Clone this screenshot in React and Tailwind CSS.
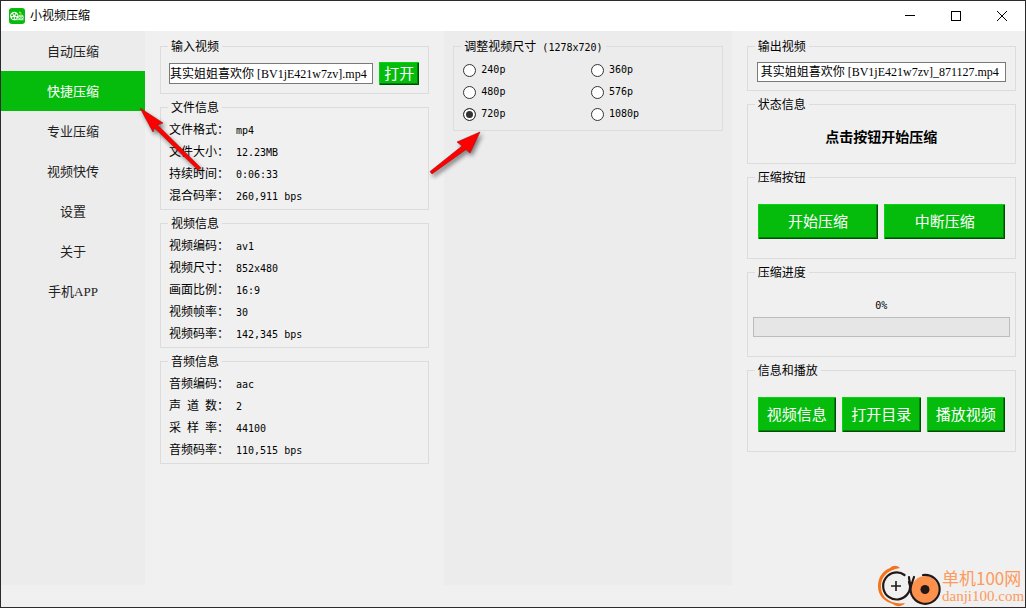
import React, { useState } from "react";

const navItems = ["自动压缩", "快捷压缩", "专业压缩", "视频快传", "设置", "关于", "手机APP"];

const fileInfo = [
  ["文件格式", "mp4"],
  ["文件大小", "12.23MB"],
  ["持续时间", "0:06:33"],
  ["混合码率", "260,911 bps"],
];

const videoInfo = [
  ["视频编码", "av1"],
  ["视频尺寸", "852x480"],
  ["画面比例", "16:9"],
  ["视频帧率", "30"],
  ["视频码率", "142,345 bps"],
];

const audioInfo = [
  ["音频编码", "aac"],
  ["声 道 数", "2"],
  ["采 样 率", "44100"],
  ["音频码率", "110,515 bps"],
];

const sizes = ["240p", "360p", "480p", "576p", "720p", "1080p"];

const Group = ({ title, className, children }) => (
  <fieldset className="min-w-0 border border-[#dcdcdc]">
    <legend className="ml-[7px] px-[3px] pt-0.5 text-xs leading-[14px]">{title}</legend>
    <div className={className}>{children}</div>
  </fieldset>
);

const Mono = ({ children }) => (
  <span className="font-['DejaVu_Sans_Mono',monospace] text-[10px] leading-none whitespace-pre">{children}</span>
);

const InfoList = ({ title, rows }) => (
  <Group title={title} className="px-2 pt-1 pb-0.5">
    <dl>
      {rows.map(([name, value]) => (
        <div key={name} className="flex h-[22px] items-center">
          <dt className="flex w-[67px] shrink-0">
            <span className="w-12 [text-align-last:justify]">{name}</span>：
          </dt>
          <dd>
            <Mono>{value}</Mono>
          </dd>
        </div>
      ))}
    </dl>
  </Group>
);

const GreenButton = ({ className, children }) => (
  <button
    type="button"
    className={`bg-[#05bc0d] pt-0.5 text-[15px] leading-none text-white shadow-[inset_1px_1px_#04d60e,inset_-1px_-1px_#024d05,inset_-2px_-2px_#038408] ${className}`}
  >
    {children}
  </button>
);

const AppIcon = () => (
  <svg width="16" height="16" viewBox="0 0 16 16" aria-hidden="true">
    <rect width="16" height="16" rx="3" fill="#05bc0d" />
    <circle cx="5.3" cy="8" r="4.2" fill="#fff" />
    <g fill="#05bc0d">
      <circle cx="5.3" cy="5.7" r="1" />
      <circle cx="3.1" cy="7.3" r="1" />
      <circle cx="7.5" cy="7.3" r="1" />
      <circle cx="4" cy="9.9" r="1" />
      <circle cx="6.6" cy="9.9" r="1" />
    </g>
    <path d="M5.3 11.7H14.5" stroke="#fff" strokeWidth=".8" />
    <circle cx="12" cy="9.2" r="2.7" fill="#d5f5d6" />
    <g fill="#05bc0d">
      <circle cx="12" cy="7.8" r=".6" />
      <circle cx="10.8" cy="9.4" r=".6" />
      <circle cx="13.2" cy="9.4" r=".6" />
      <circle cx="12" cy="10.6" r=".6" />
    </g>
    <path d="M10 3.6l2.3 1v1.4l-2.3-1z" fill="#d9e51a" />
  </svg>
);

const SiteLogo = () => (
  <svg width="64" height="42" viewBox="0 0 64 42" aria-hidden="true">
    <path
      d="M22 3C19 0 15 0 12 3C4 6 0 13 0 21C0 30 5 36 15 39C18 42 24 42 27 38C22 39 18 38 14 37C7 34 3 29 3 21C3 12 9 5 22 3Z"
      fill="#f5731b"
    />
    <path
      d="M26.500 10A13.500 13.500 0 1 0 29.500 29C32 26 33 22 31 17"
      fill="none"
      stroke="#231815"
      strokeWidth="2.200"
      strokeLinecap="round"
    />
    <path d="M18 16v10M13 21h10" stroke="#231815" strokeWidth="1.600" />
    <circle cx="47" cy="24.500" r="13.500" fill="#fd914c" />
    <path
      d="M45 10A14.500 14.500 0 1 1 33 21C32 18 31 15 31 12M33 21L36 12"
      fill="none"
      stroke="#231815"
      strokeWidth="2.200"
      strokeLinecap="round"
    />
    <circle cx="47" cy="24.500" r="4.500" fill="#231815" />
  </svg>
);

const App = () => {
  const [tab, setTab] = useState("快捷压缩");
  const [size, setSize] = useState("720p");

  return (
    <div className="relative flex min-h-screen flex-col overflow-hidden border border-[#2b2a2d] bg-[#f0f0f0] font-['Liberation_Serif','Noto_Sans_CJK_SC',sans-serif] text-xs text-black">
      <header className="flex h-[30px] items-center bg-white pl-2">
        <AppIcon />
        <h1 className="ml-[5px] flex-1">小视频压缩</h1>
        <button type="button" aria-label="最小化" className="flex h-full w-[46px] items-center justify-center">
          <svg width="10" height="10" viewBox="0 0 10 10" shapeRendering="crispEdges">
            <path d="M0 4.500H10" stroke="#000" />
          </svg>
        </button>
        <button type="button" aria-label="最大化" className="flex h-full w-[46px] items-center justify-center">
          <svg width="10" height="10" viewBox="0 0 10 10" shapeRendering="crispEdges">
            <path d="M.5 .5h9v9h-9z" fill="none" stroke="#000" />
          </svg>
        </button>
        <button type="button" aria-label="关闭" className="flex h-full w-[46px] items-center justify-center">
          <svg width="10" height="10" viewBox="0 0 10 10">
            <path d="M0 0L10 10M10 0L0 10" stroke="#000" />
          </svg>
        </button>
      </header>

      <div className="mb-[22px] flex flex-1">
        <nav className="flex w-36 shrink-0 flex-col bg-[#ececec]">
          {navItems.map((item) => (
            <button
              key={item}
              type="button"
              onClick={() => setTab(item)}
              className={`h-10 pt-0.5 text-[13px] ${tab === item ? "bg-[#05bc0d] text-white" : "text-[#222]"}`}
            >
              {item}
            </button>
          ))}
        </nav>

        <section className="flex min-w-0 flex-1 flex-col gap-[5px] px-[15px] pt-[7px]">
          <Group title="输入视频" className="flex items-center gap-1.5 px-2 py-2">
            <input
              aria-label="输入视频"
              defaultValue="其实姐姐喜欢你 [BV1jE421w7zv].mp4"
              className="h-[21px] min-w-0 flex-1 border border-[#7a7a7a] bg-white pb-0.5"
            />
            <GreenButton className="mr-px h-[23px] w-10">打开</GreenButton>
          </Group>
          <InfoList title="文件信息" rows={fileInfo} />
          <InfoList title="视频信息" rows={videoInfo} />
          <InfoList title="音频信息" rows={audioInfo} />
        </section>

        <section className="min-w-0 flex-1 bg-[#ececec] px-[9px] pt-[7px]">
          <Group
            title={
              <>
                调整视频尺寸<Mono> (1278x720)</Mono>
              </>
            }
            className="grid grid-cols-2 py-[5px] pr-[3px] pl-[9px]"
          >
            {sizes.map((s) => (
              <label key={s} className="flex h-[22px] items-center gap-[5px]">
                <input
                  type="radio"
                  name="size"
                  checked={size === s}
                  onChange={() => setSize(s)}
                  className="size-[13px] appearance-none rounded-full border border-[#333] bg-white checked:bg-[#333] checked:shadow-[inset_0_0_0_2px_#fff]"
                />
                <Mono>{s}</Mono>
              </label>
            ))}
          </Group>
        </section>

        <section className="flex min-w-0 flex-1 flex-col gap-[5px] pt-[7px] pr-[9px] pl-[15px]">
          <Group title="输出视频" className="flex px-[9px] py-2">
            <input
              aria-label="输出视频"
              defaultValue="其实姐姐喜欢你 [BV1jE421w7zv]_871127.mp4"
              className="h-5 min-w-0 flex-1 border border-[#7a7a7a] bg-white pb-0.5 pl-[3px]"
            />
          </Group>
          <Group title="状态信息" className="flex h-[51px] items-center justify-center">
            <p className="text-sm font-bold">点击按钮开始压缩</p>
          </Group>
          <Group title="压缩按钮" className="flex gap-1.5 px-2.5 py-[19px]">
            <GreenButton className="h-[35px] flex-1">开始压缩</GreenButton>
            <GreenButton className="h-[35px] flex-1">中断压缩</GreenButton>
          </Group>
          <Group title="压缩进度" className="px-[5px] pt-[17px] pb-[19px]">
            <p className="mb-1 text-center leading-4">
              <Mono>0%</Mono>
            </p>
            <div role="progressbar" aria-label="压缩进度" aria-valuenow={0} className="h-5 border border-[#bcbcbc] bg-[#e6e6e6]" />
          </Group>
          <Group title="信息和播放" className="flex gap-1.5 px-2.5 py-[19px]">
            <GreenButton className="h-[35px] flex-1">视频信息</GreenButton>
            <GreenButton className="h-[35px] flex-1">打开目录</GreenButton>
            <GreenButton className="h-[35px] flex-1">播放视频</GreenButton>
          </Group>
        </section>
      </div>

      {/* pointers over the active tab and the chosen size */}
      <svg className="pointer-events-none absolute top-[102px] left-[134px] drop-shadow-[2px_3px_2px_#0007]" width="72" height="74" viewBox="0 0 72 74" aria-hidden="true">
        <path d="M5 5L28 20L22.500 22L66 65L63 67L19.500 25L18 29Z" fill="#fe0000" stroke="#a30d0d" strokeWidth=".6" />
      </svg>
      <svg className="pointer-events-none absolute top-[124px] left-[424px] drop-shadow-[2px_3px_2px_#0007]" width="62" height="56" viewBox="0 0 62 56" aria-hidden="true">
        <path d="M55 7L45 28L41 24.500L7 49L5 46.500L37 21L32 17Z" fill="#fe0000" stroke="#a30d0d" strokeWidth=".6" />
      </svg>

      <div className="absolute right-0 bottom-0 flex items-end text-[#fd9a5c]">
        <SiteLogo />
        <div className="w-[83px] pb-[2px] whitespace-nowrap">
          <p className="font-['Noto_Sans_CJK_SC',sans-serif] text-[17px] leading-[18px]">单机100网</p>
          <p className="text-[15px] leading-[18px]">danji100.com</p>
        </div>
      </div>
    </div>
  );
};

export default App;
